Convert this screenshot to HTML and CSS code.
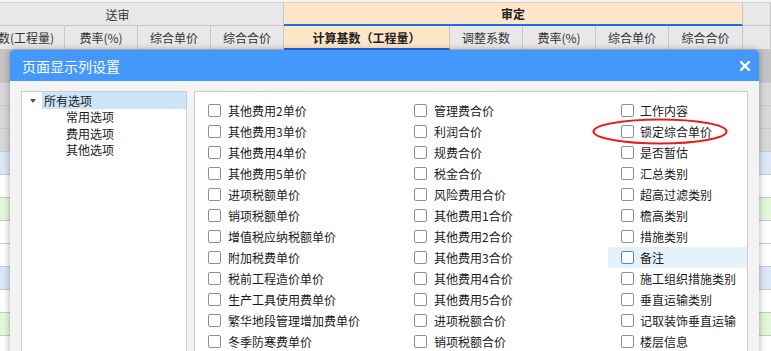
FILE: index.html
```html
<!DOCTYPE html>
<html lang="zh-CN">
<head>
  <meta charset="UTF-8">
  <title>页面显示列设置</title>
  <link rel="stylesheet" href="styles.css">
</head>
<body>
  <div class="sheet">
    <div class="top-strip"></div>
    <div class="hdr-row groups">
      <div class="cell grp-send">送审</div>
      <div class="cell grp-audit">审定</div>
      <div class="cell filler"></div>
    </div>
    <div class="hdr-row cols">
      <div class="cell w-base">计算基数(工程量)</div>
      <div class="cell w-std">费率(%)</div>
      <div class="cell w-std">综合单价</div>
      <div class="cell w-std">综合合价</div>
      <div class="cell w-base active">计算基数（工程量）</div>
      <div class="cell w-std">调整系数</div>
      <div class="cell w-std">费率(%)</div>
      <div class="cell w-std">综合单价</div>
      <div class="cell w-last">综合合价</div>
      <div class="cell filler"></div>
    </div>
    <div class="data">
      <div class="data-row first"></div>
      <div class="data-row gray"></div>
      <div class="data-row gray"></div>
      <div class="data-row gray"></div>
      <div class="data-row blue"></div>
      <div class="data-row"></div>
      <div class="data-row green"></div>
      <div class="data-row"></div>
      <div class="data-row"></div>
      <div class="data-row blue"></div>
      <div class="data-row"></div>
      <div class="data-row green"></div>
      <div class="data-row"></div>
    </div>
  </div>

  <div class="dialog">
    <div class="dialog-title">
      <span>页面显示列设置</span>
      <svg class="close" width="10" height="10" viewBox="0 0 10 10">
        <path d="M1 1 L9 9 M9 1 L1 9" stroke="#fff" stroke-width="2.4" stroke-linecap="square"/>
      </svg>
    </div>
    <div class="dialog-body">
      <div class="tree">
        <div class="node">
          <span class="caret"></span>
          <span class="node-label selected">所有选项</span>
        </div>
        <div class="child">常用选项</div>
        <div class="child">费用选项</div>
        <div class="child">其他选项</div>
      </div>
      <div class="options">
        <div class="opt-col c1">
          <div class="opt"><span class="box"></span>其他费用2单价</div>
          <div class="opt"><span class="box"></span>其他费用3单价</div>
          <div class="opt"><span class="box"></span>其他费用4单价</div>
          <div class="opt"><span class="box"></span>其他费用5单价</div>
          <div class="opt"><span class="box"></span>进项税额单价</div>
          <div class="opt"><span class="box"></span>销项税额单价</div>
          <div class="opt"><span class="box"></span>增值税应纳税额单价</div>
          <div class="opt"><span class="box"></span>附加税费单价</div>
          <div class="opt"><span class="box"></span>税前工程造价单价</div>
          <div class="opt"><span class="box"></span>生产工具使用费单价</div>
          <div class="opt"><span class="box"></span>繁华地段管理增加费单价</div>
          <div class="opt"><span class="box"></span>冬季防寒费单价</div>
        </div>
        <div class="opt-col c2">
          <div class="opt"><span class="box"></span>管理费合价</div>
          <div class="opt"><span class="box"></span>利润合价</div>
          <div class="opt"><span class="box"></span>规费合价</div>
          <div class="opt"><span class="box"></span>税金合价</div>
          <div class="opt"><span class="box"></span>风险费用合价</div>
          <div class="opt"><span class="box"></span>其他费用1合价</div>
          <div class="opt"><span class="box"></span>其他费用2合价</div>
          <div class="opt"><span class="box"></span>其他费用3合价</div>
          <div class="opt"><span class="box"></span>其他费用4合价</div>
          <div class="opt"><span class="box"></span>其他费用5合价</div>
          <div class="opt"><span class="box"></span>进项税额合价</div>
          <div class="opt"><span class="box"></span>销项税额合价</div>
        </div>
        <div class="opt-col c3">
          <div class="opt"><span class="box"></span>工作内容</div>
          <div class="opt"><span class="box"></span>锁定综合单价</div>
          <div class="opt"><span class="box"></span>是否暂估</div>
          <div class="opt"><span class="box"></span>汇总类别</div>
          <div class="opt"><span class="box"></span>超高过滤类别</div>
          <div class="opt"><span class="box"></span>檐高类别</div>
          <div class="opt"><span class="box"></span>措施类别</div>
          <div class="opt hover"><span class="box"></span>备注</div>
          <div class="opt"><span class="box"></span>施工组织措施类别</div>
          <div class="opt"><span class="box"></span>垂直运输类别</div>
          <div class="opt"><span class="box"></span>记取装饰垂直运输</div>
          <div class="opt"><span class="box"></span>楼层信息</div>
        </div>
      </div>
    </div>
  </div>

  <!-- red mark drawn over the screenshot -->
  <svg class="mark" width="140" height="30" viewBox="0 0 140 30">
    <ellipse cx="68" cy="13.5" rx="66.5" ry="12" fill="none" stroke="#e5201c" stroke-width="2.2"/>
  </svg>
</body>
</html>
```

FILE: styles.css
```css
body {
  margin: 0;
  width: 771px;
  height: 351px;
  overflow: hidden;
  position: relative;
  background: #fff;
  font-family: "Noto Sans CJK SC", "Noto Sans", sans-serif;
  font-size: 12px;
  color: #1a1a1a;
}
.sheet {
  width: 831px;
  margin-left: -60px;
}
.top-strip {
  height: 2px;
  background: #f4f4f4;
  border-bottom: 1px solid #d2d2d2;
}
.hdr-row {
  display: flex;
}
.cell {
  box-sizing: border-box;
  display: flex;
  align-items: center;
  justify-content: center;
  background: #e8e8e8;
  border-right: 1px solid #c8c8c8;
  color: #333;
  white-space: nowrap;
  overflow: hidden;
}
.groups .cell {
  height: 23px;
  border-bottom: 1px solid #c8c8c8;
}
.grp-send {
  width: 344px;
  padding-left: 12px;
}
.grp-audit {
  width: 459px;
  background: #ffe6c8;
  border-bottom: 2px solid #1a6fe6 !important;
  font-weight: bold;
  color: #222;
}
.filler {
  flex: 1;
}
.cols .cell {
  height: 24px;
  border-bottom: 1px solid #c4c4c4;
}
.w-base {
  width: 166px;
}
.cols .w-base:first-child {
  width: 125px;
  justify-content: flex-end;
  padding-right: 10px;
}
.w-std {
  width: 73px;
}
.w-last {
  width: 74px;
}
.cols .active {
  background: #ffe6c8;
  border-bottom: 2px solid #1a6fe6;
  font-weight: bold;
  color: #222;
}
.data-row {
  height: 23px;
  box-sizing: border-box;
  border-bottom: 1px solid #c8c8c8;
  background: #fff;
}
.data-row.first {
  height: 33px;
  background: #c4c4c4;
}
.data-row.gray {
  background: #d8d8d8;
}
.data-row.blue {
  background: #dce7f8;
}
.data-row.green {
  background: #e3f8d9;
}

.dialog {
  position: absolute;
  left: 10px;
  top: 50px;
  width: 749px;
  height: 330px;
  background: #f3f3f3;
  border-radius: 4px 4px 0 0;
  box-shadow: 0 0 7px rgba(0, 0, 0, 0.35);
  overflow: hidden;
}
.dialog-title {
  height: 31px;
  background: #4498fc;
  color: #fff;
  font-size: 14px;
  display: flex;
  align-items: center;
  justify-content: space-between;
  padding: 0 9px 0 12px;
}
.close {
  display: block;
}
.dialog-body {
  display: flex;
  gap: 7px;
  padding: 10px 11px 0;
}
.tree,
.options {
  box-sizing: border-box;
  height: 290px;
  background: #fff;
  border: 1px solid #cdcdcd;
}
.tree {
  width: 166px;
}
.node {
  display: flex;
  height: 17px;
}
.caret {
  width: 20px;
  position: relative;
}
.caret::after {
  content: "";
  position: absolute;
  left: 8px;
  top: 7px;
  border-left: 3px solid transparent;
  border-right: 3px solid transparent;
  border-top: 4px solid #555;
}
.node-label {
  flex: 1;
  line-height: 17px;
  padding-left: 2px;
}
.node-label.selected {
  background: #cce4f7;
}
.child {
  height: 16.5px;
  line-height: 16.5px;
  padding-left: 44px;
}
.options {
  width: 554px;
  display: flex;
  padding-top: 8px;
  overflow: hidden;
}
.opt-col.c1 {
  width: 206px;
}
.opt-col.c2 {
  width: 207px;
}
.opt-col.c3 {
  flex: 1;
}
.opt {
  height: 21px;
  display: flex;
  align-items: center;
  padding-left: 13px;
  white-space: nowrap;
}
.box {
  box-sizing: border-box;
  width: 13px;
  height: 13px;
  border: 1px solid #8e8e8e;
  border-radius: 2px;
  background: #fff;
  margin-right: 7px;
  flex-shrink: 0;
}
.c3 .box {
  margin-right: 6px;
}
.opt.hover {
  background: #e5f1fb;
}
.opt.hover .box {
  border-color: #3d8ee6;
}
.mark {
  position: absolute;
  left: 592px;
  top: 118px;
}
```
